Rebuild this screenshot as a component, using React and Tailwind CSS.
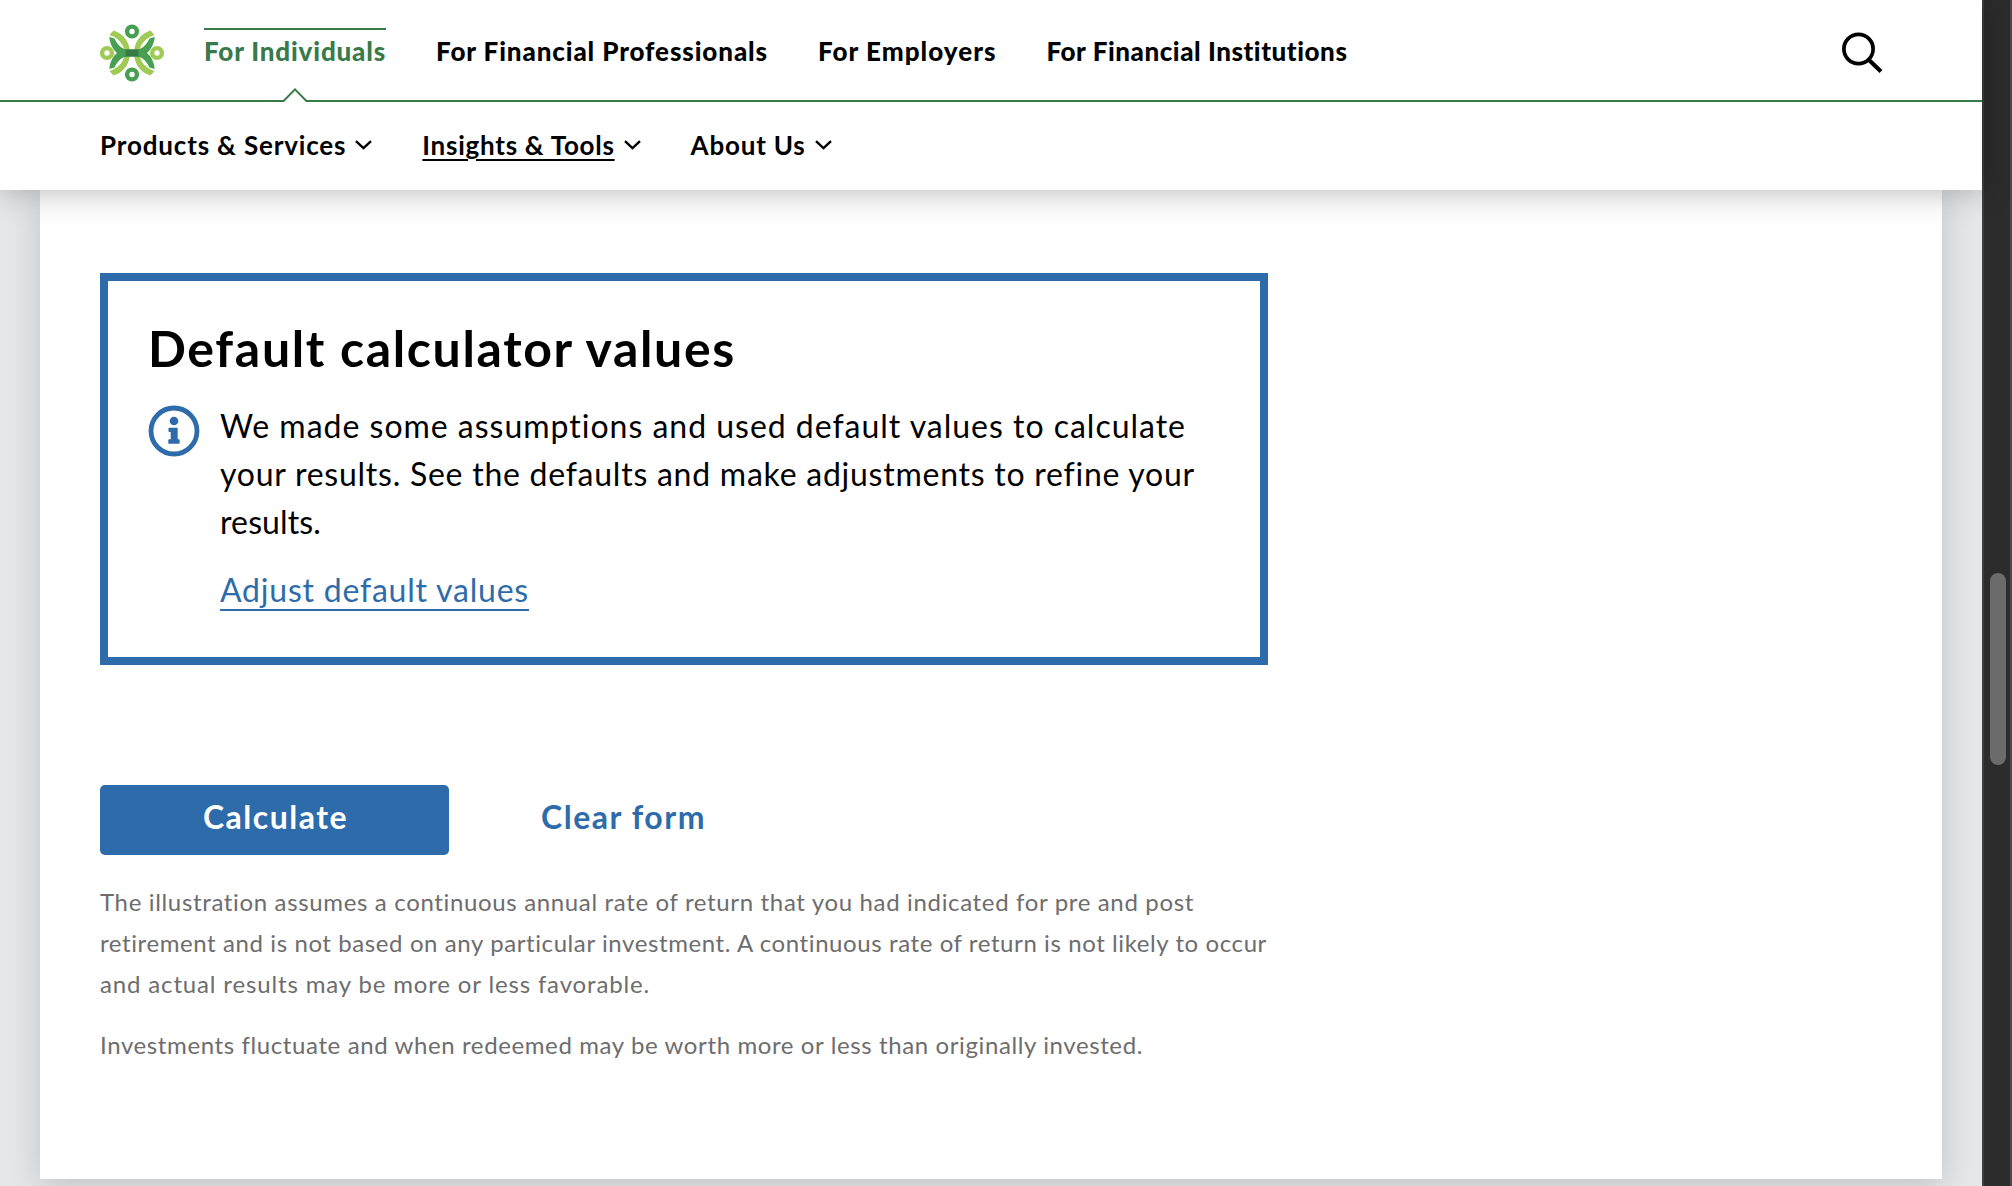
import React from 'react';

function Logo() {
  return (
    <svg className="block h-[74px] w-[74px]" viewBox="0 0 74 74" fill="none">
      <g fill="#9fca54">
        <path d="M13.500 19L17.500 14.500C28 17.500 34 27 34 37S28 56.500 17.500 59.500L13.500 55C23 52 28.500 45 28.500 37S23 22 13.500 19z" />
        <path d="M58.500 19L54.500 14.500C44 17.500 38 27 38 37S44 56.500 54.500 59.500L58.500 55C49 52 43.500 45 43.500 37S49 22 58.500 19z" />
      </g>
      <g fill="#479f52">
        <path d="M13.300 21L18.500 22.500C21.500 29 26 33.600 32 33.600H40C46 33.600 50.500 29 53.500 22.500L58.700 21C58 31 51 40.400 42 40.400H30C21 40.400 14 31 13.300 21z" />
        <path d="M13.300 53L18.500 51.500C21.500 45 26 40.400 32 40.400H40C46 40.400 50.500 45 53.500 51.500L58.700 53C58 43 51 33.600 42 33.600H30C21 33.600 14 43 13.300 53z" />
      </g>
      <g stroke="#9fca54" strokeWidth="4.400">
        <circle cx="11" cy="37" r="4.900" />
        <circle cx="61" cy="37" r="4.900" />
      </g>
      <g stroke="#479f52" strokeWidth="4.400">
        <circle cx="36" cy="15.500" r="4.900" />
        <circle cx="36" cy="58.500" r="4.900" />
      </g>
      <path d="M29.500 33.600H42.500V40.400H29.500z" fill="#357a45" />
    </svg>
  );
}

function Chevron() {
  return (
    <svg className="block h-[10px] w-[17px]" viewBox="0 0 17 10" fill="none" stroke="#000" strokeWidth="2.4">
      <path d="M1 1.200l7.500 7 7.500-7" />
    </svg>
  );
}

export default function App() {
  return (
    <div className="flex h-[1186px] w-[2012px] overflow-hidden bg-[#e5e7e9] font-['Lato',sans-serif] whitespace-nowrap text-black">
      <div className="flex w-[1982px] flex-col">
        <header className="relative z-10 h-[190px] shrink-0 bg-white shadow-[0_0_32px_rgba(0,0,0,0.3)]">
          <div className="relative flex h-[102px] border-b-2 border-[#387a49] pl-24">
            <div className="pt-4"><Logo /></div>
            <nav className="ml-[34px] flex flex-1 items-start gap-[50px] pt-7 text-[26px] leading-[32px] font-black">
              <a className="border-t-2 border-[#387a49] pt-[5px] tracking-[0.824px] text-[#387a49]">For Individuals</a>
              <a className="pt-[7px] tracking-[0.891px]">For Financial Professionals</a>
              <a className="pt-[7px] tracking-[1.02px]">For Employers</a>
              <a className="pt-[7px] tracking-[0.554px]">For Financial Institutions</a>
            </nav>
            <svg className="mt-8 mr-[98px] h-[42px] w-[42px]" viewBox="0 0 42 42" fill="none" stroke="#000">
              <circle cx="16.500" cy="17" r="14.600" strokeWidth="3.7" />
              <path d="M27 28l12 11.400" strokeWidth="4.2" />
            </svg>
            <svg className="absolute top-[87px] left-[282px] h-[15px] w-[26px]" viewBox="0 0 26 15">
              <path d="M1 15L13 2.400 25 15z" fill="#fff" />
              <path d="M0 14h1.600L13 2.400 24.400 14H26" fill="none" stroke="#387a49" strokeWidth="2" />
            </svg>
          </div>
          <nav className="flex items-center gap-[50px] pt-[27px] pl-[100px] text-[26px] leading-[32px] font-bold">
            <a className="flex items-center gap-[9px] tracking-[0.84px]">Products &amp; Services<Chevron /></a>
            <a className="flex items-center gap-[9px]"><span className="tracking-[0.74px] underline decoration-2 underline-offset-[4px]">Insights &amp; Tools</span><Chevron /></a>
            <a className="flex items-center gap-[9px] tracking-[0.805px]">About Us<Chevron /></a>
          </nav>
        </header>
        <main className="mx-10 h-[989px] bg-white px-[60px] pt-[83px] shadow-[0_8px_32px_rgba(0,0,0,0.16)]">
          <section className="h-[392px] w-[1168px] border-8 border-[#2e6bab] pt-[37px] pl-10">
            <h2 className="text-[50px] leading-[60px] font-bold tracking-[1.66px]">Default calculator values</h2>
            <div className="mt-[24px] flex">
              <svg className="mt-[3px] h-[52px] w-[52px]" viewBox="0 0 52 52" fill="none">
                <circle cx="26" cy="26" r="23" stroke="#2e6bab" strokeWidth="4.800" />
                <circle cx="26" cy="16" r="4.300" fill="#2e6bab" />
                <path d="M21.300 22.700h7.600q.8 0 .8.8v10.800h1.200q.8 0 .8.8v2.900q0 .8-.8.8h-9.800q-.8 0-.8-.8v-2.900q0-.8.8-.8h1.600v-7.200h-1.400q-.8 0-.8-.8v-2.800q0-.8.8-.8z" fill="#2e6bab" />
              </svg>
              <div className="ml-5 text-[32px] leading-[48px]">
                <p>
                  <span className="tracking-[0.986px]">We made some assumptions and used default values to calculate</span><br />
                  <span className="tracking-[0.751px]">your results. See the defaults and make adjustments to refine your</span><br />
                  <span className="tracking-[0.121px]">results.</span>
                </p>
                <a className="mt-[21px] inline-block h-[44px] border-b-2 border-[#2e6bab] leading-[45px] tracking-[0.788px] text-[#2e6bab]">Adjust default values</a>
              </div>
            </div>
          </section>
          <div className="mt-[120px] flex h-[70px] text-[32px] leading-[64px] font-bold">
            <button className="flex w-[349px] justify-center rounded-[5px] bg-[#2e6bab] pl-[2px] tracking-[1.500px] text-white">Calculate</button>
            <button className="ml-[92px] flex tracking-[1.535px] text-[#2e6bab]">Clear form</button>
          </div>
          <div className="mt-[26px] text-[24px] leading-[41px] text-[#6d6d6d]">
            <p>
              <span className="tracking-[0.654px]">The illustration assumes a continuous annual rate of return that you had indicated for pre and post</span><br />
              <span className="tracking-[0.594px]">retirement and is not based on any particular investment. A continuous rate of return is not likely to occur</span><br />
              <span className="tracking-[0.851px]">and actual results may be more or less favorable.</span>
            </p>
            <p className="mt-[20px] tracking-[0.611px]">Investments fluctuate and when redeemed may be worth more or less than originally invested.</p>
          </div>
        </main>
      </div>
      <div className="flex w-[30px] justify-center border-r-2 border-l-2 border-r-[#4c4c4c] border-l-[#3e3e3e] bg-[#2c2c2c] pt-[573px]">
        <div className="h-48 w-4 translate-x-px rounded-full bg-[#6b6b6b]" />
      </div>
    </div>
  );
}
